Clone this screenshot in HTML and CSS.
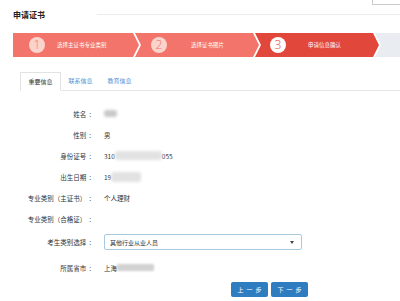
FILE: index.html
```html
<!DOCTYPE html>
<html lang="zh-CN">
<head>
  <meta charset="UTF-8" />
  <title>申请证书</title>
  <link rel="stylesheet" href="styles.css">
</head>
<body>
  <div class="topbar"><div class="search"></div></div>
  <div class="title-row">
    <h1>申请证书</h1>
    <div class="title-line"></div>
  </div>

  <div class="steps">
    <div class="step first">
      <span class="num">1</span><span class="step-text">选择主证书专业类别</span>
    </div>
    <div class="step">
      <span class="num">2</span><span class="step-text">选择证书图片</span>
    </div>
    <div class="step current">
      <span class="num">3</span><span class="step-text">申请信息确认</span>
    </div>
    <div class="step rest"></div>
  </div>

  <div class="tabs">
    <div class="tab active">重要信息</div>
    <div class="tab">联系信息</div>
    <div class="tab">教育信息</div>
  </div>

  <div class="form">
    <div class="row">
      <div class="label">姓名<span class="colon">:</span></div>
      <div class="value"><span class="blur name-blur"></span></div>
    </div>
    <div class="row">
      <div class="label">性别<span class="colon">:</span></div>
      <div class="value">男</div>
    </div>
    <div class="row">
      <div class="label">身份证号<span class="colon">:</span></div>
      <div class="value">310<span class="blur id-blur"></span>055</div>
    </div>
    <div class="row">
      <div class="label">出生日期<span class="colon">:</span></div>
      <div class="value">19<span class="blur date-blur"></span></div>
    </div>
    <div class="row">
      <div class="label">专业类别（主证书）<span class="colon">:</span></div>
      <div class="value">个人理财</div>
    </div>
    <div class="row">
      <div class="label">专业类别（合格证）<span class="colon">:</span></div>
      <div class="value"></div>
    </div>
    <div class="row select-row">
      <div class="label">考生类别选择<span class="colon">:</span></div>
      <div class="select">
        <span>其他行业从业人员</span>
        <span class="caret"></span>
      </div>
    </div>
    <div class="row city-row">
      <div class="label">所属省市<span class="colon">:</span></div>
      <div class="value">上海<span class="blur city-blur"></span></div>
    </div>
    <div class="buttons">
      <button type="button">上一步</button>
      <button type="button">下一步</button>
    </div>
  </div>
</body>
</html>
```

FILE: styles.css
```css
body {
  margin: 0;
  background: #fff;
  color: #333;
  font-family: "Noto Sans CJK SC", "Noto Sans", sans-serif;
  overflow: hidden;
}
.topbar {
  height: 5px;
  display: flex;
  justify-content: flex-end;
}
.search {
  width: 27px;
  height: 4px;
  border-left: 1px solid #ccc;
  border-bottom: 1px solid #ccc;
}
.title-row {
  display: flex;
  align-items: center;
  height: 19px;
  padding-left: 13px;
}
.title-row h1 {
  margin: 0;
  font-size: 8px;
  font-weight: bold;
  color: #222;
}
.title-line {
  flex: 1;
  height: 1px;
  margin-left: 52px;
  background: #ececec;
}
.steps {
  display: flex;
  height: 24px;
  margin: 9px 0 0 13px;
}
.step {
  width: 124px;
  flex-shrink: 0;
  margin-left: -4px;
  background: #f2746a;
  display: flex;
  align-items: center;
  color: #fff;
  clip-path: polygon(0 0, calc(100% - 6px) 0, 100% 50%, calc(100% - 6px) 100%, 0 100%, 6px 50%);
}
.step.first {
  margin-left: 0;
  width: 126px;
  clip-path: polygon(0 0, calc(100% - 6px) 0, 100% 50%, calc(100% - 6px) 100%, 0 100%);
}
.step.current {
  background: #e2473b;
}
.step.rest {
  width: 40px;
  background: #e9ecf0;
  clip-path: polygon(0 0, 100% 0, 100% 100%, 0 100%, 6px 50%);
}
.num {
  width: 16px;
  height: 16px;
  border-radius: 50%;
  background: #fbd3cd;
  color: #f2746a;
  font-size: 12px;
  font-weight: 300;
  line-height: 16px;
  text-align: center;
  margin-left: 16px;
  font-family: "Open Sans", sans-serif;
}
.first .num {
  margin-left: 16px;
}
.current .num {
  background: #fff;
  color: #e2473b;
  margin-left: 15px;
}
.step-text {
  font-size: 5.5px;
  margin-left: 12px;
}
.step:nth-child(2) .step-text {
  margin-left: 24px;
}
.current .step-text {
  margin-left: 22px;
}
.tabs {
  display: flex;
  height: 18px;
  margin: 15px 0 0 20px;
  border-bottom: 1px solid #e6e6e6;
}
.tab {
  padding: 0 7.5px;
  font-size: 6px;
  line-height: 18px;
  color: #4a90d9;
}
.tab.active {
  color: #333;
  border: 1px solid #e2e2e2;
  border-bottom-color: #fff;
  line-height: 17px;
  margin-bottom: -1px;
  background: #fff;
}
.form {
  padding-top: 12px;
}
.row {
  display: flex;
  align-items: center;
  height: 21px;
  font-size: 6.5px;
}
.label {
  width: 91px;
  text-align: right;
  flex-shrink: 0;
}
.colon {
  margin-left: 3px;
}
.value {
  margin-left: 13px;
  display: flex;
  align-items: center;
}
.blur {
  display: inline-block;
  height: 7px;
  background: #d6d6d6;
  border-radius: 3px;
  filter: blur(1.5px);
}
.name-blur {
  width: 13px;
  background: #c8c8c8;
}
.id-blur {
  width: 47px;
  background: #e2e2e2;
  height: 9px;
}
.date-blur {
  width: 30px;
  background: #e2e2e2;
  height: 10px;
}
.city-blur {
  width: 37px;
  background: #d2d2d2;
  border-radius: 1px;
  filter: blur(1px);
}
.select-row {
  height: 25px;
  align-items: flex-start;
}
.select-row .label {
  line-height: 16px;
  margin-top: 5px;
}
.select {
  margin: 5px 0 0 13px;
  width: 186px;
  height: 14px;
  padding: 0 5px;
  border: 1px solid #a9c9de;
  border-radius: 2px;
  display: flex;
  align-items: center;
  justify-content: space-between;
  font-size: 6px;
}
.caret {
  width: 0;
  height: 0;
  border-left: 2.5px solid transparent;
  border-right: 2.5px solid transparent;
  border-top: 3px solid #444;
  margin-right: 2px;
}
.city-row {
  margin-top: 3px;
}
.buttons {
  display: flex;
  gap: 3px;
  padding-left: 231px;
  margin-top: 4px;
}
button {
  width: 37px;
  height: 15px;
  padding: 0;
  border: none;
  border-radius: 2px;
  background: #2f7dc1;
  color: #fff;
  font-family: inherit;
  font-size: 6px;
  letter-spacing: 3px;
  text-indent: 3px;
}
```
